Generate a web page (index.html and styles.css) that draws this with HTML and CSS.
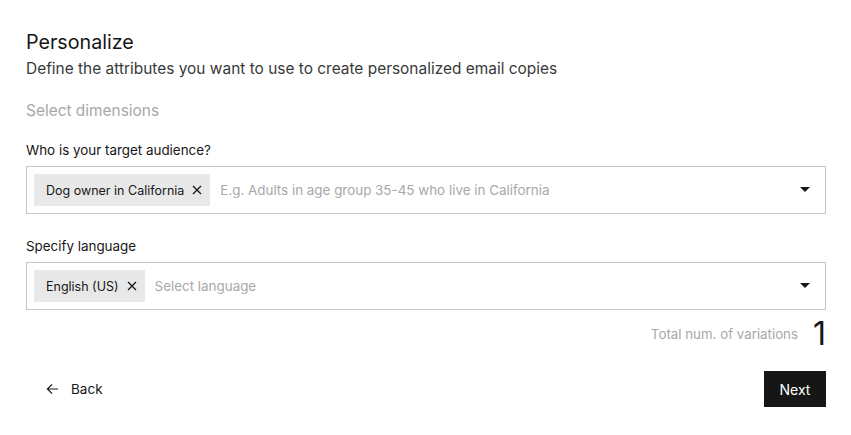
FILE: index.html
```html
<!DOCTYPE html>
<html>
<head>
<meta charset="utf-8">
<link rel="stylesheet" href="styles.css">
</head>
<body>
<main class="page">
  <h1 class="title">Personalize</h1>
  <p class="subtitle">Define the attributes you want to use to create personalized email copies</p>
  <h2 class="section">Select dimensions</h2>

  <div class="field">
    <label class="label">Who is your target audience?</label>
    <div class="select">
      <span class="chip">Dog owner in California
        <svg class="x" viewBox="0 0 10 10" width="10" height="10"><path d="M1 1L9 9M9 1L1 9" stroke="#161616" stroke-width="1.3" fill="none"/></svg>
      </span>
      <span class="placeholder">E.g. Adults in age group 35-45 who live in California</span>
      <svg class="caret" viewBox="0 0 10 6" width="10" height="6"><path d="M0 0H10L5 5Z" fill="#161616"/></svg>
    </div>
  </div>

  <div class="field">
    <label class="label">Specify language</label>
    <div class="select">
      <span class="chip">English (US)
        <svg class="x" viewBox="0 0 10 10" width="10" height="10"><path d="M1 1L9 9M9 1L1 9" stroke="#161616" stroke-width="1.3" fill="none"/></svg>
      </span>
      <span class="placeholder">Select language</span>
      <svg class="caret" viewBox="0 0 10 6" width="10" height="6"><path d="M0 0H10L5 5Z" fill="#161616"/></svg>
    </div>
  </div>

  <div class="total">
    <span class="total-label">Total num. of variations</span>
    <span class="total-num">1</span>
  </div>

  <div class="actions">
    <button class="back">
      <svg viewBox="0 0 14 12" width="13" height="12"><path d="M13 6H1.5M6.5 1L1.5 6L6.5 11" stroke="#161616" stroke-width="1.3" fill="none"/></svg>
      <span>Back</span>
    </button>
    <button class="next">Next</button>
  </div>
</main>
</body>
</html>
```

FILE: styles.css
```css
* { box-sizing: border-box; }
body {
  margin: 0;
  background: #fff;
  font-family: Inter, "Liberation Sans", sans-serif;
  color: #161616;
}
.page {
  padding: 28px 25px 0 26px;
  display: flex;
  flex-direction: column;
}
.title {
  margin: 0;
  font-size: 19.7px;
  font-weight: 400;
  line-height: 28px;
}
.subtitle {
  margin: 0;
  font-size: 15.45px;
  line-height: 26px;
  color: #393939;
}
.section {
  margin: 16px 0 0;
  font-size: 15.45px;
  font-weight: 400;
  line-height: 26px;
  color: #a8a8a8;
}
.field {
  display: flex;
  flex-direction: column;
  margin-top: 17px;
}
.field + .field { margin-top: 23px; }
.label {
  font-size: 13.4px;
  line-height: 18px;
  margin-bottom: 7px;
}
.select {
  height: 48px;
  border: 1px solid #c6c6c6;
  display: flex;
  align-items: center;
  padding: 0 15px 0 7px;
}
.chip {
  height: 32px;
  background: #e8e8e8;
  display: flex;
  align-items: center;
  gap: 8px;
  padding: 0 8px 0 12px;
  font-size: 12.5px;
  color: #161616;
}
.placeholder {
  margin-left: 10px;
  flex: 1;
  font-size: 13.4px;
  color: #a8a8a8;
}
.total {
  display: flex;
  justify-content: flex-end;
  align-items: center;
  gap: 15px;
  margin-top: 8px;
  height: 32px;
}
.total-label {
  font-size: 13.3px;
  color: #a8a8a8;
}
.total-num {
  font-size: 32px;
  line-height: 32px;
}
.actions {
  display: flex;
  justify-content: space-between;
  align-items: center;
  margin-top: 21px;
}
.back {
  border: 0;
  background: none;
  font: inherit;
  font-size: 13.5px;
  color: #161616;
  display: flex;
  align-items: center;
  gap: 12px;
  padding: 0 0 0 20px;
}
.next {
  border: 0;
  background: #161616;
  color: #fff;
  font: inherit;
  font-size: 14px;
  height: 36px;
  width: 62px;
  padding: 0;
}
```
